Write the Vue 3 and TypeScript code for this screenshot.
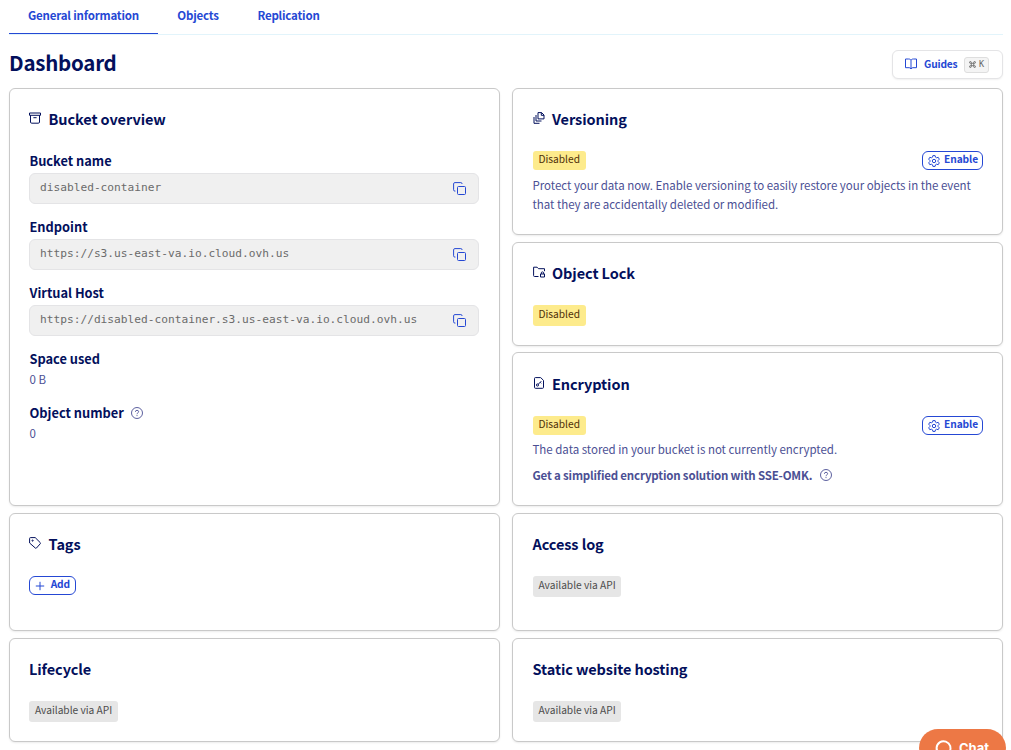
<script setup lang="ts">
interface Tab {
  label: string
  active: boolean
  cls: string
}

interface Field {
  label: string
  value: string
}

const tabs: Tab[] = [
  { label: 'General information', active: true, cls: 'tab-general' },
  { label: 'Objects', active: false, cls: 'tab-objects' },
  { label: 'Replication', active: false, cls: 'tab-replication' },
]

const fields: Field[] = [
  { label: 'Bucket name', value: 'disabled-container' },
  { label: 'Endpoint', value: 'https://s3.us-east-va.io.cloud.ovh.us' },
  { label: 'Virtual Host', value: 'https://disabled-container.s3.us-east-va.io.cloud.ovh.us' },
]
</script>

<template>
  <div class="page">
    <nav class="tabs">
      <a v-for="t in tabs" :key="t.label" class="tab" :class="[t.cls, { active: t.active }]">{{ t.label }}</a>
    </nav>

    <header class="head">
      <h1>Dashboard</h1>
      <button class="guides">
        <svg class="book" viewBox="0 0 12 12" width="12" height="12">
          <path d="M6 2.2C5.4 1.2 4.6 1 3.6 1H.5v8.7h3.7c1 0 1.5.4 1.8 1.3.3-.9.8-1.3 1.8-1.3h3.7V1H8.400C7.400 1 6.600 1.200 6 2.200zM6 2.200V11" />
        </svg>
        <span>Guides</span>
        <kbd>
          <svg viewBox="0 0 8 8" width="7" height="7">
            <path d="M2.600 2.600h2.800v2.800H2.600zM2.600 2.600H1.700a1 1 0 1 1 .9-.9zM5.400 2.600V1.700a1 1 0 1 1 .9.9zM5.400 5.400h.9a1 1 0 1 1-.9.9zM2.600 5.400v.9a1 1 0 1 1-.9-.9z" />
          </svg>
          <span>K</span>
        </kbd>
      </button>
    </header>

    <main class="columns">
      <section class="card overview">
        <h2>
          <svg class="icon" viewBox="0 0 12 12" width="12" height="12">
            <path d="M.5 1h11v2.300H.5zM1.500 3.300v6.700q0 1.200 1.200 1.200h6.600q1.200 0 1.200-1.200V3.300M4.400 5.700h3.200" />
          </svg>
          <span>Bucket overview</span>
        </h2>
        <div v-for="f in fields" :key="f.label" class="group">
          <h3>{{ f.label }}</h3>
          <div class="field">
            <code>{{ f.value }}</code>
            <svg class="copy" viewBox="0 0 13 13" width="13" height="13">
              <rect x="4.500" y="4.500" width="8" height="8" rx="1" />
              <path d="M2.400 9.100H1.900Q.6 9.100.6 7.800V1.900Q.6.6 1.900.6h5.900Q9.100.6 9.100 1.900" />
            </svg>
          </div>
        </div>
        <div class="stat">
          <h3>Space used</h3>
          <p class="value">0 B</p>
        </div>
        <div class="stat">
          <h3>
            <span>Object number</span>
            <svg class="help" viewBox="0 0 12 12" width="12" height="12">
              <circle cx="6" cy="6" r="5.500" />
              <path d="M4.400 4.800Q4.500 3.300 6 3.300t1.600 1.300Q7.600 5.500 6.700 6 6 6.400 6 7.200M6 8.100v1" />
            </svg>
          </h3>
          <p class="value">0</p>
        </div>
      </section>

      <div class="stack">
        <section class="card versioning">
          <h2>
            <svg class="icon" viewBox="0 0 12 12" width="12" height="12">
              <path d="M5 .6h3.600l2.400 2.400v3.900H5zM8.300.6v2.700H11M3 3v6h5.500M1 5v6.300h5.500" />
            </svg>
            <span>Versioning</span>
          </h2>
          <div class="row">
            <span class="badge warn">Disabled</span>
            <button class="action enable">
              <svg class="gear" viewBox="0 0 12 12" width="12" height="12">
                <path d="M4.900.6h2.200l.4 1.600 1.100.6 1.600-.5 1.100 1.900-1.200 1.200v1.200l1.200 1.200-1.100 1.900-1.600-.5-1.100.6-.4 1.600H4.900l-.4-1.600-1.100-.6-1.600.5-1.100-1.900 1.200-1.200V5.400L.7 4.200l1.100-1.900 1.600.5 1.100-.6z" />
                <circle cx="6" cy="6" r="1.700" />
              </svg>
              <span>Enable</span>
            </button>
          </div>
          <p class="text">Protect your data now. Enable versioning to easily restore your objects in the event<br />that they are accidentally deleted or modified.</p>
        </section>

        <section class="card lock">
          <h2>
            <svg class="icon" viewBox="0 0 12 12" width="12" height="12">
              <path d="M5.500 10.500H1.500Q.6 10.500.6 9.600V1.200h3.500l1.400 1.500h6v2.500M7.500 8h4v3h-4zM8.300 8V6.900q0-1 1.200-1t1.200 1V8" />
            </svg>
            <span>Object Lock</span>
          </h2>
          <span class="badge warn tall">Disabled</span>
        </section>

        <section class="card encryption">
          <h2>
            <svg class="icon" viewBox="0 0 12 12" width="12" height="12">
              <path d="M1.500 1.500q0-.9.9-.9h5.300L10.500 3.400v7q0 .9-.9.9H2.400q-.9 0-.9-.9zM5.300 7.200l3-3M7.200 5.300l1 1" />
              <circle cx="4.500" cy="8" r="1.100" />
            </svg>
            <span>Encryption</span>
          </h2>
          <div class="row">
            <span class="badge warn">Disabled</span>
            <button class="action enable">
              <svg class="gear" viewBox="0 0 12 12" width="12" height="12">
                <path d="M4.900.6h2.200l.4 1.600 1.100.6 1.600-.5 1.100 1.900-1.200 1.200v1.200l1.200 1.200-1.100 1.900-1.600-.5-1.100.6-.4 1.600H4.900l-.4-1.600-1.100-.6-1.600.5-1.100-1.900 1.200-1.200V5.400L.7 4.200l1.100-1.900 1.600.5 1.100-.6z" />
                <circle cx="6" cy="6" r="1.700" />
              </svg>
              <span>Enable</span>
            </button>
          </div>
          <p class="text enc">The data stored in your bucket is not currently encrypted.</p>
          <p class="strong">
            <span>Get a simplified encryption solution with SSE-OMK.</span>
            <svg class="help" viewBox="0 0 12 12" width="12" height="12">
              <circle cx="6" cy="6" r="5.500" />
              <path d="M4.400 4.800Q4.500 3.300 6 3.300t1.600 1.300Q7.600 5.500 6.700 6 6 6.400 6 7.200M6 8.100v1" />
            </svg>
          </p>
        </section>
      </div>

      <section class="card mid">
        <h2>
          <svg class="icon" viewBox="0 0 12 12" width="12" height="12">
            <path d="M1.500.6h4.700l5.100 5.100q.5.500 0 1L7.400 11.100q-.5.500-1 0L.6 6V1.500q0-.9.9-.9z" />
            <circle cx="3.600" cy="3.600" r=".6" />
          </svg>
          <span>Tags</span>
        </h2>
        <button class="action add">
          <svg viewBox="0 0 10 10" width="10" height="10"><path d="M5 .8v8.400M.8 5h8.400" /></svg>
          <span>Add</span>
        </button>
      </section>

      <section class="card mid">
        <h2><span>Access log</span></h2>
        <span class="badge api">Available via API</span>
      </section>

      <section class="card low">
        <h2><span>Lifecycle</span></h2>
        <span class="badge api">Available via API</span>
      </section>

      <section class="card low">
        <h2><span>Static website hosting</span></h2>
        <span class="badge api">Available via API</span>
      </section>
    </main>

    <button class="chat">
      <svg viewBox="0 0 18 18" width="18" height="18">
        <path d="M4 14.500A7 7 0 1 1 9 16.200H3z" />
      </svg>
      <span>Chat</span>
    </button>
  </div>
</template>

<style>
html,
body {
  margin: 0;
  background: #fff;
  overflow: hidden;
}
</style>

<style scoped>
.page {
  height: 750px;
  box-sizing: border-box;
  padding: 0 8px 0 9px;
  overflow: hidden;
  font-family: "Noto Sans CJK SC", "Noto Sans", sans-serif;
  font-size: 11.500px;
  color: #4b4f94;
}
.page * {
  box-sizing: border-box;
}
h1,
h2,
h3,
p {
  margin: 0;
}
button {
  font: inherit;
  margin: 0;
  background: #fff;
}
svg {
  flex: none;
  fill: none;
  stroke: currentColor;
  stroke-width: 1;
}
span,
code {
  white-space: nowrap;
}
.tabs {
  display: flex;
  height: 35px;
  border-bottom: 1px solid #e2f4fb;
}
.tab {
  height: 34px;
  line-height: 31px;
  text-align: center;
  font-weight: 700;
  font-size: 11.500px;
  letter-spacing: -0.190px;
  color: #2548d4;
}
.tab.active {
  border-bottom: 1px solid #2548d4;
}
.tab-general {
  width: 149px;
}
.tab-objects {
  width: 80px;
}
.tab-replication {
  width: 101px;
}
.head {
  display: flex;
  justify-content: space-between;
  height: 53px;
  padding-top: 15px;
}
h1 {
  margin-top: -1px;
  font-size: 20.500px;
  line-height: 27px;
  font-weight: 700;
  letter-spacing: -0.250px;
  color: #03105c;
}
.guides {
  display: flex;
  align-items: center;
  width: 111px;
  height: 29px;
  padding: 0 13px 2px 12px;
  border: 1px solid #e4e4e6;
  border-radius: 6px;
  box-shadow: 0 1px 2px rgba(0, 0, 0, 0.06);
  color: #2548d4;
  font-size: 10.200px;
  font-weight: 700;
  letter-spacing: -0.150px;
}
.guides > span {
  margin-top: -1px;
}
.guides .book {
  margin: 1px 7px 0 0;
}
kbd {
  display: flex;
  align-items: center;
  justify-content: center;
  gap: 3px;
  width: 25px;
  height: 16px;
  margin: 2px 0 0 auto;
  border: 1px solid #dedede;
  border-radius: 3px;
  background: #f4f4f4;
  color: #666;
  font: 8.500px/14px "DejaVu Sans Mono", monospace;
}
kbd span {
  margin-top: -1px;
}
kbd svg {
  margin-top: -1px;
}
.columns {
  display: grid;
  grid-template-columns: 491px 491px;
  grid-template-rows: 418px 118px 104px;
  gap: 7px 12px;
}
.stack {
  display: flex;
  flex-direction: column;
}
.card {
  padding: 18px 19px 0 19.500px;
  border: 1px solid #c9c9c9;
  border-radius: 6px;
  box-shadow: 0 1px 2px rgba(0, 0, 0, 0.08);
  background: #fff;
}
.overview {
  padding-left: 19px;
  padding-right: 20px;
}
.mid:nth-child(odd),
.low:nth-child(odd) {
  padding-left: 19px;
}
.versioning {
  height: 147px;
  margin-bottom: 7px;
}
.lock {
  height: 104px;
  margin-bottom: 6px;
}
.encryption {
  height: 154px;
  padding-top: 19px;
}
h2 {
  display: flex;
  align-items: center;
  height: 24px;
  margin-bottom: 20px;
  font-size: 14.500px;
  line-height: 24px;
  font-weight: 700;
  letter-spacing: -0.090px;
  color: #03105c;
}
.icon {
  margin: -2px 7.500px 0 0;
}
h3 {
  display: flex;
  align-items: center;
  height: 20px;
  padding-left: 0.500px;
  font-size: 12.800px;
  line-height: 20px;
  font-weight: 700;
  color: #03105c;
}
.group {
  height: 66px;
}
.field {
  display: flex;
  align-items: center;
  justify-content: space-between;
  height: 31px;
  margin-top: 2px;
  padding: 0 12px 0 10px;
  border: 1px solid #e4e4e6;
  border-radius: 6px;
  background: #f0f0f0;
}
.field code {
  margin-top: -1px;
  font: 11.200px/16px "DejaVu Sans Mono", monospace;
  color: #6b6b6b;
}
.copy {
  color: #2548d4;
}
.stat {
  height: 54px;
}
.value {
  padding-left: 0.500px;
  font-size: 11.500px;
  line-height: 20px;
}
.help {
  margin-left: 7.500px;
  color: #4b4f94;
  stroke-width: 0.900;
}
.row {
  display: flex;
  justify-content: space-between;
}
.badge {
  display: block;
  height: 19px;
  padding: 0 6px;
  border-radius: 3px;
  font-size: 10.200px;
  line-height: 15px;
}
.warn {
  width: 53px;
  background: #fdeb8c;
  color: #4f2f08;
}
.tall,
.api {
  height: 21px;
  line-height: 17px;
}
.api {
  width: 88px;
  background: #e6e6e6;
  color: #4d4d4d;
}
.mid:nth-child(odd) .api,
.low:nth-child(odd) .api {
  width: 89px;
}
.action {
  display: flex;
  align-items: center;
  justify-content: space-between;
  height: 19px;
  border: 1px solid #2548d4;
  border-radius: 6px;
  color: #2548d4;
  font-size: 10.200px;
  font-weight: 700;
}
.action span {
  line-height: 14px;
  margin-top: -4px;
  letter-spacing: -0.100px;
}
.enable {
  width: 61px;
  padding: 0 4px 0 5px;
}
.add {
  width: 47px;
  padding: 0 5px 0 5px;
}
.text {
  margin-top: 6px;
  font-size: 11.500px;
  line-height: 19px;
  letter-spacing: -0.020px;
}
.enc {
  margin-top: 5px;
}
.strong {
  display: flex;
  align-items: center;
  height: 20px;
  margin-top: 6px;
  font-size: 11.500px;
  font-weight: 700;
  letter-spacing: -0.180px;
}
.chat {
  position: fixed;
  left: 919px;
  top: 729px;
  display: flex;
  align-items: center;
  width: 87px;
  height: 38px;
  padding: 0 0 0 16px;
  border: 0;
  border-radius: 19px;
  background: #ed7845;
  color: #fff;
  font: 700 13px/18px Inter, sans-serif;
}
.chat svg {
  margin-right: 6px;
  stroke-width: 2;
}
</style>
